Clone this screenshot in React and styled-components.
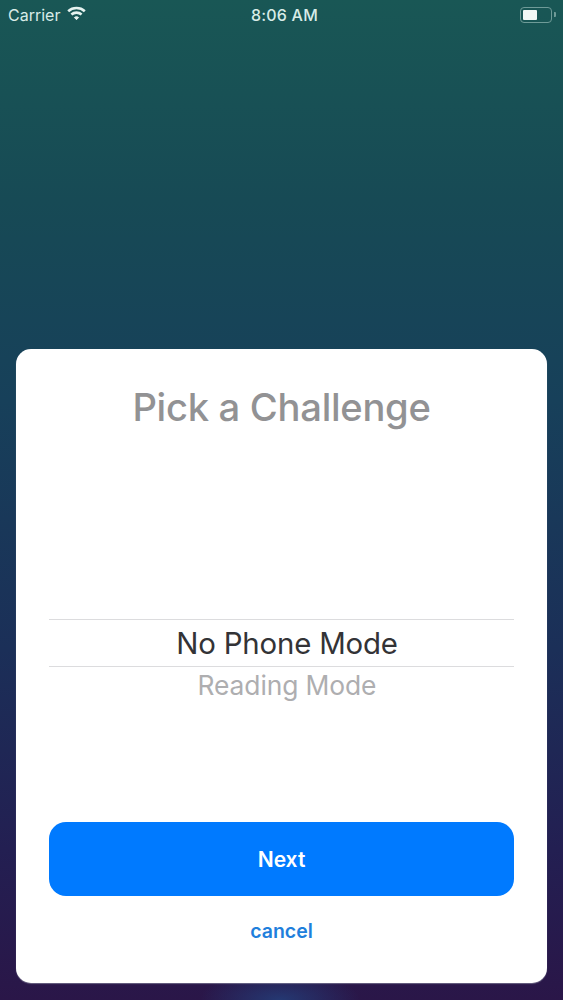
import React from 'react';
import styled, { createGlobalStyle } from 'styled-components';

const GlobalStyle = createGlobalStyle`
  html, body {
    margin: 0;
    padding: 0;
    background: #1c1a45;
  }
  * {
    box-sizing: border-box;
  }
`

export default function App() {
  return (
    <Screen>
      <GlobalStyle />
      <StatusBar>
        <StatusLeft>
          <span>Carrier</span>
          <svg width="19" height="15" viewBox="0 0 19 15" fill="none" stroke="#e6f3f0" strokeWidth="2.600">
            <path d="M1.200 5.200C5.800 1 13.200 1 17.800 5.200" />
            <path d="M4.400 8.500C7.300 6 11.700 6 14.600 8.500" />
            <path d="M7.400 11.500L9.500 13.700L11.600 11.500C10.400 10.400 8.600 10.400 7.400 11.500Z" fill="#e6f3f0" strokeWidth="1" />
          </svg>
        </StatusLeft>
        <Clock>8:06 AM</Clock>
        <Battery>
          <BatteryBody>
            <BatteryLevel />
          </BatteryBody>
          <BatteryCap />
        </Battery>
      </StatusBar>

      <Card>
        <Title>Pick a Challenge</Title>
        <Picker>
          <PickerRow>No Phone Mode</PickerRow>
          <PickerNext>Reading Mode</PickerNext>
        </Picker>
        <NextButton>Next</NextButton>
        <CancelButton>cancel</CancelButton>
      </Card>
      <Glow />
    </Screen>
  )
}

const Screen = styled.div`
 position: relative;
 display: flex;
 flex-direction: column;
 width: 563px;
 height: 1000px;
 overflow: hidden;
 font-family: Inter, "Liberation Sans", sans-serif;
 background: linear-gradient(180deg, #195755 0%, #174a55 20%, #17405a 40%, #1b2f58 65%, #231f52 85%, #2a1648 100%);
`
const StatusBar = styled.div`
 display: grid;
 grid-template-columns: 1fr auto 1fr;
 align-items: center;
 height: 29px;
 padding: 0 7px 0 8px;
 color: #d8ece8;
 font-size: 16px;
`
const StatusLeft = styled.div`
 display: flex;
 align-items: center;
 gap: 7px;
 svg{
   margin-top: -2px;
 }
`
const Clock = styled.div`
 padding-left: 5px;
 font-weight: 500;
 letter-spacing: 0.2px;
`
const Battery = styled.div`
 display: flex;
 align-items: center;
 justify-content: flex-end;
 gap: 2px;
`
const BatteryBody = styled.div`
 width: 32px;
 height: 16px;
 padding: 2px;
 border: 1px solid #6f9b98;
 border-radius: 4px;
`
const BatteryLevel = styled.div`
 width: 14px;
 height: 100%;
 background-color: #f2f8f6;
 border-radius: 1px;
`
const BatteryCap = styled.div`
 width: 2px;
 height: 5px;
 background-color: #6f9b98;
 border-radius: 0 1px 1px 0;
`
const Card = styled.div`
 display: flex;
 flex-direction: column;
 height: 634px;
 margin: 320px 16px 0;
 padding: 0 33px;
 background-color: #fff;
 border-radius: 15px;
 box-shadow: 0 1px 1px rgba(150, 150, 170, 0.6);
 position: relative;
 z-index: 1;
`
const Title = styled.h1`
 margin: 33px 0 0;
 color: #929294;
 font-size: 38.200px;
 line-height: 50px;
 font-weight: 500;
 text-align: center;
 letter-spacing: -0.3px;
`
const Picker = styled.div`
 display: flex;
 flex-direction: column;
 margin-top: 187px;
 text-align: center;
`
const PickerRow = styled.div`
 height: 48px;
 padding-left: 11px;
 border-top: 1px solid #dcdcde;
 border-bottom: 1px solid #dcdcde;
 color: #333336;
 font-size: 29.400px;
 line-height: 47px;
 letter-spacing: -0.2px;
`
const PickerNext = styled.div`
 padding-left: 11px;
 color: #aeaeb0;
 font-size: 26.400px;
 line-height: 36px;
 letter-spacing: -0.1px;
`
const NextButton = styled.button`
 height: 74px;
 margin-top: auto;
 border: none;
 border-radius: 17px;
 background-color: #007aff;
 color: #fff;
 font-family: inherit;
 font-size: 21px;
 font-weight: 600;
 cursor: pointer;
`
const CancelButton = styled.button`
 height: 26px;
 margin: 22px 0 39px;
 padding: 0;
 border: none;
 background: none;
 color: #1f7fdc;
 font-family: inherit;
 font-size: 19.500px;
 font-weight: 600;
 cursor: pointer;
`
const Glow = styled.div`
 position: absolute;
 left: 200px;
 bottom: -30px;
 width: 160px;
 height: 60px;
 background: radial-gradient(closest-side, rgba(35, 65, 125, 0.8), rgba(35, 65, 125, 0));
`
